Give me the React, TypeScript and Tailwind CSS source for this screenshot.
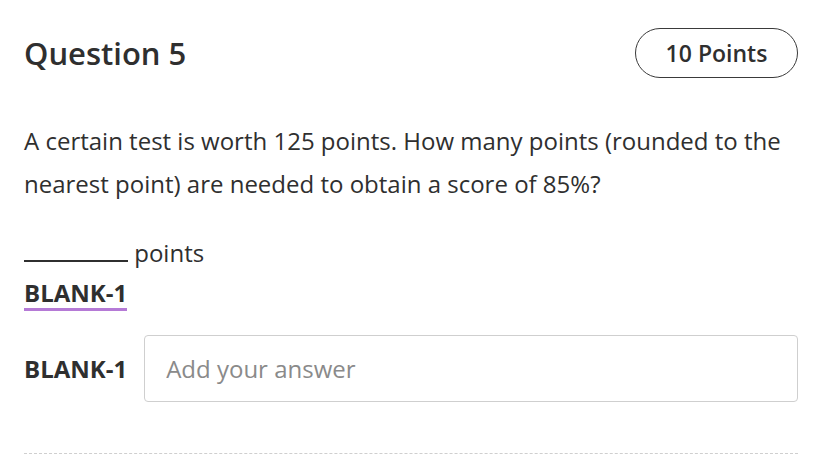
export default function App() {
  return (
    <div
      className="w-[820px] h-[454px] overflow-hidden bg-white text-[#2f2f2f]"
      style={{ fontFamily: '"Open Sans", "Noto Sans", sans-serif' }}
    >
      <div className="pl-6 pr-[22px] pt-[28px]">
        <div className="flex items-center justify-between">
          <h2 className="text-[31px] font-semibold leading-[40px]">Question 5</h2>
          <span className="flex h-[50px] w-[163px] items-center justify-center rounded-full border-[1.5px] border-[#3a3a3a] text-[23px] font-semibold">
            10 Points
          </span>
        </div>

        <p className="mt-[41px] text-[24px] leading-[43px]">
          A certain test is worth 125 points. How many points (rounded to the nearest point) are needed to obtain a score of 85%?
        </p>

        <div className="mt-[32px] text-[24px] leading-[32px]">
          <span className="inline-block w-[104px] border-b-2 border-[#2f2f2f] align-baseline" /> points
        </div>
        <div className="mt-[9px] inline-block border-b-[3px] border-[#b57ad6] text-[24px] font-bold leading-[30px]">
          BLANK-1
        </div>

        <div className="mt-[24px] flex items-center gap-[17px]">
          <span className="text-[24px] font-bold">BLANK-1</span>
          <input
            className="h-[67px] flex-1 rounded border border-[#cfcfcf] px-[21px] text-[24px] placeholder:text-[#8a8a8a] outline-none"
            placeholder="Add your answer"
          />
        </div>

        <div className="mt-[51px] border-t border-dashed border-[#cfcfcf]" />
      </div>
    </div>
  );
}
